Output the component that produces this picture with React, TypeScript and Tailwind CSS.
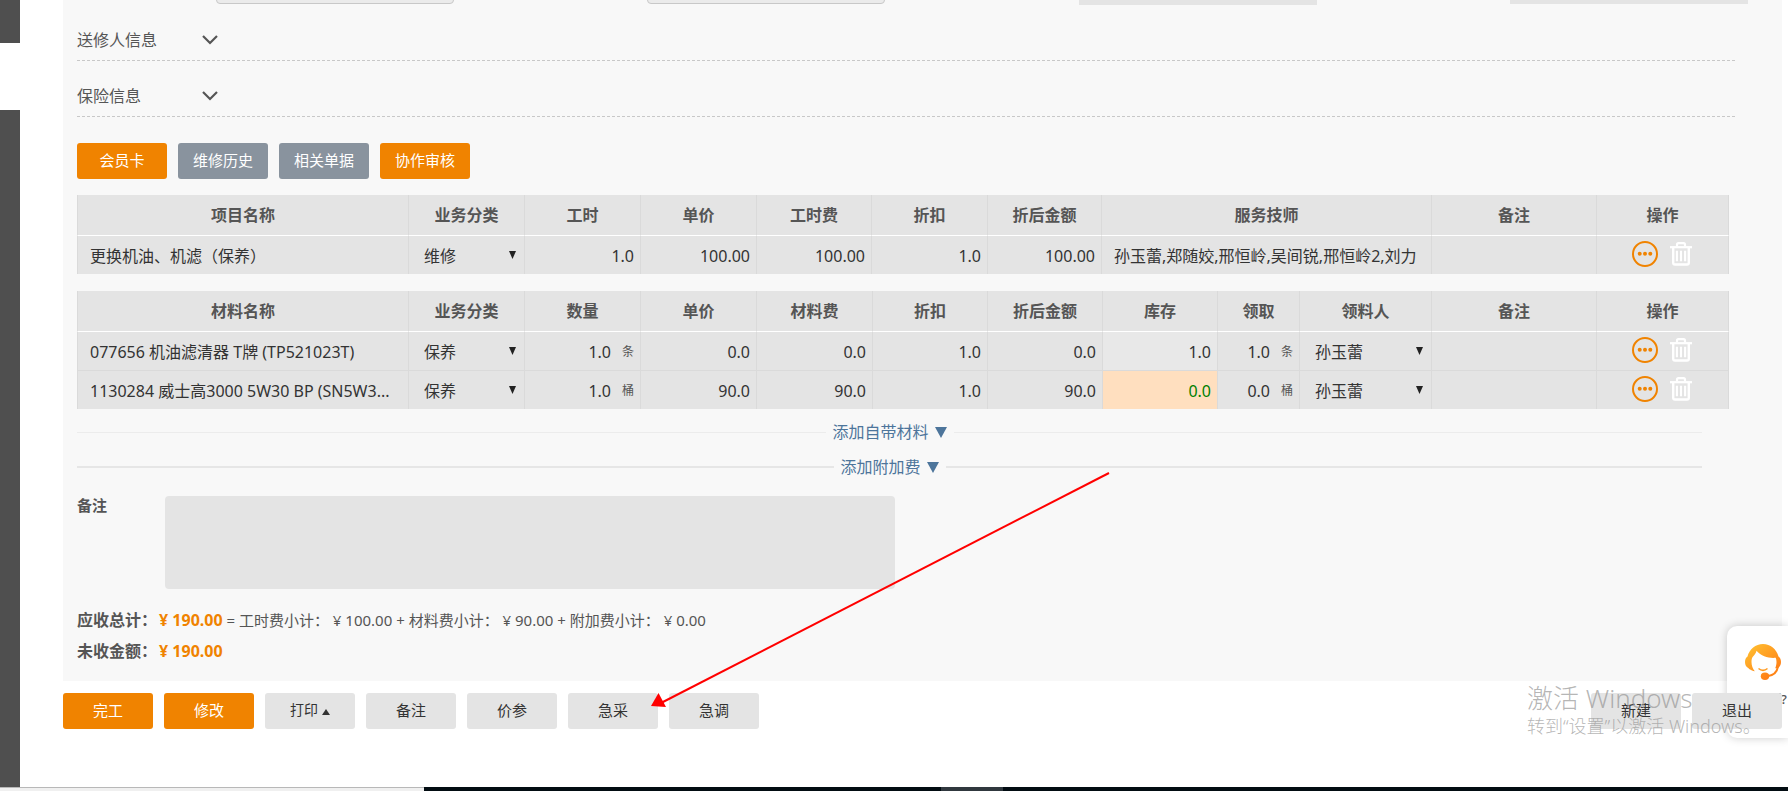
import type { ReactNode } from "react";

interface WorkItem {
  name: string;
  category: string;
  hours: string;
  price: string;
  fee: string;
  discount: string;
  total: string;
  technicians: string;
}

interface Material {
  name: string;
  category: string;
  count: string;
  unit: string;
  price: string;
  fee: string;
  discount: string;
  total: string;
  stock: string;
  short: boolean;
  taken: string;
  receiver: string;
}

const workItems: WorkItem[] = [
  { name: "更换机油、机滤（保养）", category: "维修", hours: "1.0", price: "100.00", fee: "100.00", discount: "1.0", total: "100.00", technicians: "孙玉蕾,郑随姣,邢恒岭,吴间锐,邢恒岭2,刘力" },
];

const materials: Material[] = [
  { name: "077656 机油滤清器 T牌 (TP521023T)", category: "保养", count: "1.0", unit: "条", price: "0.0", fee: "0.0", discount: "1.0", total: "0.0", stock: "1.0", short: false, taken: "1.0", receiver: "孙玉蕾" },
  { name: "1130284 威士高3000 5W30 BP (SN5W3...", category: "保养", count: "1.0", unit: "桶", price: "90.0", fee: "90.0", discount: "1.0", total: "90.0", stock: "0.0", short: true, taken: "0.0", receiver: "孙玉蕾" },
];

const workColumns = [
  { label: "项目名称", width: "w-[331px]" },
  { label: "业务分类", width: "w-[116px]" },
  { label: "工时", width: "w-[116px]" },
  { label: "单价", width: "w-[116px]" },
  { label: "工时费", width: "w-[115px]" },
  { label: "折扣", width: "w-[116px]" },
  { label: "折后金额", width: "w-[114px]" },
  { label: "服务技师", width: "w-[330px]" },
  { label: "备注", width: "w-[165px]" },
  { label: "操作", width: "w-[133px]" },
];

const materialColumns = [
  { label: "材料名称", width: "w-[331px]" },
  { label: "业务分类", width: "w-[116px]" },
  { label: "数量", width: "w-[116px]" },
  { label: "单价", width: "w-[116px]" },
  { label: "材料费", width: "w-[116px]" },
  { label: "折扣", width: "w-[115px]" },
  { label: "折后金额", width: "w-[115px]" },
  { label: "库存", width: "w-[115px]" },
  { label: "领取", width: "w-[82px]" },
  { label: "领料人", width: "w-[132px]" },
  { label: "备注", width: "w-[165px]" },
  { label: "操作", width: "w-[133px]" },
];

const BUTTON_TONES = {
  orange: "bg-[#f08300] text-white",
  slate: "bg-[#89939e] text-white",
  gray: "bg-[#e4e4e4] text-[#333]",
};

function ActionButton({ tone, children }: { tone: keyof typeof BUTTON_TONES; children: ReactNode }) {
  return (
    <button type="button" className={`flex h-9 w-[90px] items-center justify-center gap-1 rounded-[3px] pb-0.5 text-[15px] ${BUTTON_TONES[tone]}`}>
      {children}
    </button>
  );
}

function Section({ title }: { title: string }) {
  return (
    <div className="flex h-14 items-end border-b border-dashed border-[#c8c8c8] pb-2">
      <h2 className="w-[125px] text-base leading-6">{title}</h2>
      <button type="button" aria-label={title} className="flex h-6 items-center">
        <svg width="16" height="10" viewBox="0 0 16 10" fill="none" stroke="#555" strokeWidth="2.200">
          <path d="M1 1l7 7 7-7" />
        </svg>
      </button>
    </div>
  );
}

function CellSelect({ value, label }: { value: string; label: string }) {
  return (
    <div className="flex items-center pr-2 pl-[15px]">
      <select aria-label={label} defaultValue={value} className="min-w-0 flex-1 appearance-none bg-transparent pt-0.5 text-base leading-6 text-[#333]">
        <option>{value}</option>
      </select>
      <svg width="7" height="8" viewBox="0 0 7 8" fill="#222" className="pointer-events-none">
        <path d="M0 0h7L3.500 8z" />
      </svg>
    </div>
  );
}

function HeadRow({ columns }: { columns: { label: string; width: string }[] }) {
  return (
    <thead>
      <tr className="h-[41px]">
        {columns.map((c) => (
          <th key={c.label} className={`${c.width} border-b border-l border-b-white border-l-[#dadada] p-0 text-base leading-6 font-bold text-[#555] last:border-r last:border-r-[#dadada]`}>
            {c.label}
          </th>
        ))}
      </tr>
    </thead>
  );
}

function Cell({ children, className = "p-0" }: { children?: ReactNode; className?: string }) {
  return (
    <td className={`border-l border-[#dadada] last:border-r ${className}`}>{children}</td>
  );
}

function NumberCell({ value }: { value: string }) {
  return <Cell className="pt-0.5 pr-1.5 text-right">{value}</Cell>;
}

function UnitCell({ value, unit }: { value: string; unit: string }) {
  return (
    <Cell>
      <div className="flex items-center justify-end gap-[11px] pt-0.5 pr-1.5">
        <span>{value}</span>
        <span className="text-xs text-[#555]">{unit}</span>
      </div>
    </Cell>
  );
}

function RowActions() {
  return (
    <Cell>
      <div className="flex items-center justify-center gap-3 pr-0.5 pb-0.5">
        <button type="button" aria-label="更多">
          <svg width="26" height="26" viewBox="0 0 26 26" fill="none">
            <circle cx="13" cy="13" r="12" stroke="#f08300" strokeWidth="2" />
            <g fill="#f08300">
              <circle cx="7.700" cy="12.700" r="2" />
              <circle cx="13" cy="12.700" r="2" />
              <circle cx="18.300" cy="12.700" r="2" />
            </g>
          </svg>
        </button>
        <button type="button" aria-label="删除">
          <svg width="22" height="24" viewBox="0 0 22 24" fill="none" stroke="#fff">
            <path d="M0 5.200h22" strokeWidth="2.200" />
            <path d="M7 4.500V2.700Q7 1.200 8.500 1.200h5Q15 1.200 15 2.700v1.800" strokeWidth="2.200" />
            <path d="M3.200 5.500V20.700q0 1.800 1.800 1.800h12q1.800 0 1.800-1.800V5.500" strokeWidth="2.400" />
            <path d="M6.900 8.800v10.500M11 8.800v10.500M15.100 8.800v10.500" strokeWidth="2.100" />
          </svg>
        </button>
      </div>
    </Cell>
  );
}

function AddLine({ label, line }: { label: string; line: string }) {
  return (
    <div className="mt-[11px] mr-[33px] flex h-6 items-center gap-[7px]">
      <div className={`flex-1 ${line}`} />
      <button type="button" className="flex items-center gap-1.5 text-base leading-6 text-[#4d759b]">
        {label}
        <svg width="12" height="11" viewBox="0 0 12 11" fill="currentColor">
          <path d="M0 0h12L6 11z" />
        </svg>
      </button>
      <div className={`flex-1 ${line}`} />
    </div>
  );
}

function ServiceWidget() {
  return (
    <aside className="absolute top-[626px] right-0 flex h-28 w-[61px] flex-col rounded-l-[10px] bg-white pt-[18px] pl-[15px] shadow-[0_0_10px_rgba(0,0,0,0.2)]">
      <svg width="40" height="37" viewBox="-3 0 40 37">
        <defs>
          <linearGradient id="headset" gradientUnits="userSpaceOnUse" x1="4" y1="2" x2="30" y2="34">
            <stop offset="0" stopColor="#ffbe30" />
            <stop offset="1" stopColor="#ff7814" />
          </linearGradient>
        </defs>
        <g fill="url(#headset)">
          <path d="M2.500 12.500C4.500 5 10.500 0 18 0s13.500 5 15.500 12.500C35.200 13.500 36 15.700 36 18c0 2.800-1.200 5-3.200 6l-2.600.2c.9-2 1.300-4.200 1.300-6.200 0-1.700-.3-3-.8-4.200-6.700.6-14.200-1.200-19.200-7-.4 2.500-2.200 4.300-3.700 6-1 1.300-1.300 3-1.300 5.200 0 3.600 1.200 6.500 3.300 9.200C5.500 26.500 4 24.700 3.200 24 1.200 23 0 20.800 0 18c0-2.300.8-4.500 2.500-5.500z" />
          <ellipse cx="20" cy="32.300" rx="4.200" ry="3.700" />
        </g>
        <path d="M33 22.500C32 28.500 28.500 31.700 22 32.200" fill="none" stroke="#ff8416" strokeWidth="2" />
        <path d="M13.500 24.500q4.500 3.800 9 0" fill="none" stroke="#ff9a1f" strokeWidth="1.500" />
      </svg>
      <span className="mt-2 text-[13px] leading-5 font-medium whitespace-nowrap text-[#555]">有问题?</span>
    </aside>
  );
}

export default function App() {
  return (
    <div className="relative flex min-h-screen flex-col overflow-hidden bg-white font-['Noto_Sans','Noto_Sans_CJK_SC',sans-serif] text-[#555]">
      <ServiceWidget />

      <div className="flex flex-1">
        <nav className="flex w-5 flex-col">
          <div className="h-[43px] bg-[#4f4f4f]" />
          <div className="mt-[67px] flex-1 bg-[#4f4f4f]" />
        </nav>

        <main className="mr-1.5 ml-[43px] min-w-0 flex-1">
          <div className="bg-[#f8f8f8] pb-[18px] pl-3.5">
            {/* bottom edge of the form row scrolled out of view */}
            <div className="mr-[34px] ml-[139px] flex h-[5px] items-end justify-between overflow-hidden">
              <input aria-label="字段一" className="mb-px h-9 w-[238px] rounded border border-[#c8c8c8] bg-[#ebebeb]" />
              <input aria-label="字段二" className="mb-px h-9 w-[238px] rounded border border-[#c8c8c8] bg-[#ebebeb]" />
              <input aria-label="字段三" className="h-9 w-[238px] bg-[#e4e4e4]" />
              <input aria-label="字段四" className="mb-px h-9 w-[238px] bg-[#e4e4e4]" />
            </div>

            <div className="mr-[47px]">
              <Section title="送修人信息" />
              <Section title="保险信息" />

              <div className="mt-[26px] flex gap-[11px]">
                <ActionButton tone="orange">会员卡</ActionButton>
                <ActionButton tone="slate">维修历史</ActionButton>
                <ActionButton tone="slate">相关单据</ActionButton>
                <ActionButton tone="orange">协作审核</ActionButton>
              </div>

              <div className="mr-1.5">
                <table className="mt-4 w-full table-fixed border-separate border-spacing-0 bg-[#e4e4e4] text-base leading-6 text-[#333]">
                  <HeadRow columns={workColumns} />
                  <tbody>
                    {workItems.map((w) => (
                      <tr key={w.name} className="h-[38px]">
                        <Cell className="truncate pt-0.5 pl-3">{w.name}</Cell>
                        <Cell><CellSelect value={w.category} label="业务分类" /></Cell>
                        <NumberCell value={w.hours} />
                        <NumberCell value={w.price} />
                        <NumberCell value={w.fee} />
                        <NumberCell value={w.discount} />
                        <NumberCell value={w.total} />
                        <Cell className="truncate pt-0.5 pl-3">{w.technicians}</Cell>
                        <Cell />
                        <RowActions />
                      </tr>
                    ))}
                  </tbody>
                </table>

                <table className="mt-[17px] w-full table-fixed border-separate border-spacing-0 bg-[#e4e4e4] text-base leading-6 text-[#333]">
                  <HeadRow columns={materialColumns} />
                  <tbody>
                    {materials.map((m) => (
                      <tr key={m.name} className="h-[38px] not-first:h-[39px] not-first:*:border-t">
                        <Cell className="truncate pt-0.5 pl-3">{m.name}</Cell>
                        <Cell><CellSelect value={m.category} label="业务分类" /></Cell>
                        <UnitCell value={m.count} unit={m.unit} />
                        <NumberCell value={m.price} />
                        <NumberCell value={m.fee} />
                        <NumberCell value={m.discount} />
                        <NumberCell value={m.total} />
                        <Cell className={`pt-0.5 pr-1.5 text-right ${m.short ? "bg-[#ffdfbf] text-[#008000]" : "bg-[#e8e8e8]"}`}>{m.stock}</Cell>
                        <UnitCell value={m.taken} unit={m.unit} />
                        <Cell><CellSelect value={m.receiver} label="领料人" /></Cell>
                        <Cell />
                        <RowActions />
                      </tr>
                    ))}
                  </tbody>
                </table>
              </div>

              <AddLine label="添加自带材料" line="border-t border-[#ececec]" />
              <AddLine label="添加附加费" line="border-t-2 border-[#e6e6e6]" />

              <div className="mt-[17px] flex">
                <label htmlFor="remark" className="w-[88px] text-[15px] leading-[18px] font-bold">备注</label>
                <textarea id="remark" className="h-[93px] w-[730px] resize-none rounded bg-[#e4e4e4] p-2" />
              </div>

              <p className="mt-[19px] text-[15px] leading-6">
                <b className="mr-0.5 text-base leading-6">应收总计：</b>
                <b className="text-base leading-6 text-[#f08300]">¥ 190.00</b>
                {" = 工时费小计： ¥ 100.00 + 材料费小计： ¥ 90.00 + 附加费小计： ¥ 0.00"}
              </p>
              <p className="mt-[7px] text-base leading-6 font-bold">
                <span className="mr-0.5">未收金额：</span>
                <span className="text-[#f08300]">¥ 190.00</span>
              </p>
            </div>
          </div>

          <div className="relative mt-3 mb-[58px] flex gap-[11px]">
            <ActionButton tone="orange">完工</ActionButton>
            <ActionButton tone="orange">修改</ActionButton>
            <ActionButton tone="gray">
              <span className="text-sm">打印</span>
              <svg width="8" height="6" viewBox="0 0 8 6" fill="currentColor" className="mt-1">
                <path d="M0 6h8L4 0z" />
              </svg>
            </ActionButton>
            <ActionButton tone="gray">备注</ActionButton>
            <ActionButton tone="gray">价参</ActionButton>
            <ActionButton tone="gray">急采</ActionButton>
            <ActionButton tone="gray">急调</ActionButton>
            <div className="ml-auto flex gap-[11px]">
              <ActionButton tone="gray">新建</ActionButton>
              <ActionButton tone="gray">退出</ActionButton>
            </div>
          </div>
        </main>
      </div>

      <footer className="flex h-1">
        <div className="w-[424px] border-t border-[#b8b8b8] bg-[#f0f0f0]" />
        <div className="w-[517px] bg-[#020c12]" />
        <div className="w-[62px] bg-[#30383e]" />
        <div className="flex-1 bg-[#020c12]" />
      </footer>

      <svg width="460" height="238" viewBox="0 0 460 238" className="pointer-events-none absolute top-[472px] left-[651px]">
        <path d="M458 1L10 231" stroke="#f00" strokeWidth="2" />
        <path d="M0 234L7.500 221L15 235z" fill="#f00" />
      </svg>

      <div className="pointer-events-none absolute top-[680px] right-[21px] w-[240px] font-light whitespace-nowrap text-[#969696]/70">
        <div className="text-[26px] leading-9">激活 Windows</div>
        <div className="text-lg leading-5">转到“设置”以激活 Windows。</div>
      </div>
    </div>
  );
}
